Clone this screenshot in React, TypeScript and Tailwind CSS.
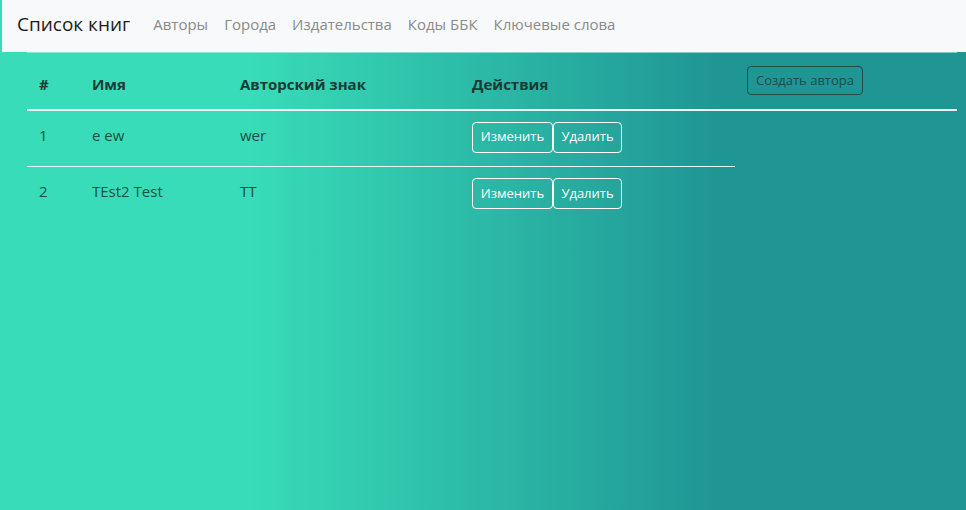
import React from "react";

type Author = { id: number; name: string; sign: string };

const authors: Author[] = [
  { id: 1, name: "e ew", sign: "wer" },
  { id: 2, name: "TEst2 Test", sign: "TT" },
];

const links = ["Авторы", "Города", "Издательства", "Коды ББК", "Ключевые слова"];

export default function App() {
  return (
    <div
      className="min-h-[510px] bg-[linear-gradient(to_right,#38dcb8_26%,#1f9594_75%)] text-[#1a3b34]"
      style={{ fontFamily: '"Open Sans", "Noto Sans", sans-serif' }}
    >
      <nav className="ml-[2px] flex h-[52px] items-center bg-[#f8f9fa] pb-1 pl-[15px]">
        <span className="mr-[15px] text-[19px] text-[#1c1c1c]">Список книг</span>
        {links.map((l) => (
          <a key={l} className="px-2 text-[15px] text-[#8a8a8a]">
            {l}
          </a>
        ))}
      </nav>

      <div className="pl-[27px] pr-[9px]">
        <table className="w-[930px] border-collapse border-t border-t-[#bff3e6]/60 text-left">
          <thead>
            <tr className="h-[57px] border-b-2 border-b-[#eef8f5]">
              <th className="w-[53px] px-3 pb-[13px] align-bottom text-[15px] font-bold">#</th>
              <th className="w-[148px] px-3 pb-[13px] align-bottom text-[15px] font-bold">Имя</th>
              <th className="w-[232px] px-3 pb-[13px] align-bottom text-[15px] font-bold">Авторский знак</th>
              <th className="w-[275px] px-3 pb-[13px] align-bottom text-[15px] font-bold">Действия</th>
              <th className="px-3 pt-[13px] align-top">
                <button className="h-[29px] rounded-[4px] border border-[#1c4e46] px-2 text-[13px] font-normal text-[#1c4e46]">
                  Создать автора
                </button>
              </th>
            </tr>
          </thead>
          <tbody>
            {authors.map((a, i) => {
              const cell =
                i === 0
                  ? "h-[57px] border-b border-b-[#e6f7f2] px-3 align-top"
                  : "h-[57px] px-3 align-top";
              return (
                <tr key={a.id}>
                  <td className={`${cell} pt-[13px] text-[15px] text-[#1d4f44]`}>{a.id}</td>
                  <td className={`${cell} pt-[13px] text-[15px] text-[#1d4f44]`}>{a.name}</td>
                  <td className={`${cell} pt-[13px] text-[15px] text-[#1d4f44]`}>{a.sign}</td>
                  <td className={`${cell} pt-[11px]`}>
                    <div className="flex">
                      <button className="h-[31px] w-[81px] rounded-[4px] border border-white text-[13px] font-medium text-white">
                        Изменить
                      </button>
                      <button className="h-[31px] w-[69px] rounded-[4px] border border-white text-[13px] font-medium text-white">
                        Удалить
                      </button>
                    </div>
                  </td>
                </tr>
              );
            })}
          </tbody>
        </table>
      </div>
    </div>
  );
}
